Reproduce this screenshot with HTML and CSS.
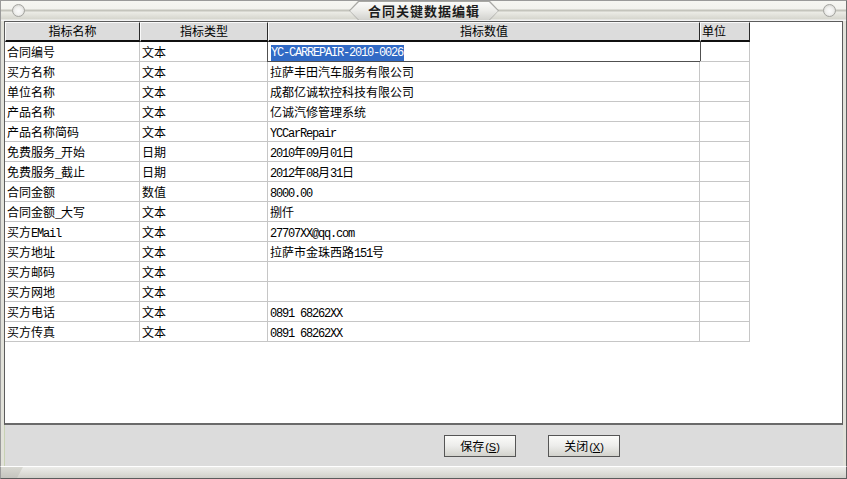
FILE: index.html
```html
<!DOCTYPE html>
<html>
<head>
<meta charset="utf-8">
<title>合同关键数据编辑</title>
<link rel="stylesheet" href="styles.css">
</head>
<body>
<div class="window">
  <div class="titlebar">
    <span class="knob"></span>
    <div class="tab"><div class="tab-in">合同关键数据编辑</div></div>
    <span class="knob"></span>
  </div>
  <div class="middle">
    <div class="grid">
      <div class="row head">
        <div class="c">指标名称</div>
        <div class="c">指标类型</div>
        <div class="c">指标数值</div>
        <div class="c left">单位</div>
      </div>
      <div class="row">
        <div class="c">合同编号</div>
        <div class="c">文本</div>
        <div class="c edit"><span class="sel m">YC-CARREPAIR-2010-0026</span></div>
        <div class="c"></div>
      </div>
      <div class="row">
        <div class="c">买方名称</div>
        <div class="c">文本</div>
        <div class="c">拉萨丰田汽车服务有限公司</div>
        <div class="c"></div>
      </div>
      <div class="row">
        <div class="c">单位名称</div>
        <div class="c">文本</div>
        <div class="c">成都亿诚软控科技有限公司</div>
        <div class="c"></div>
      </div>
      <div class="row">
        <div class="c">产品名称</div>
        <div class="c">文本</div>
        <div class="c">亿诚汽修管理系统</div>
        <div class="c"></div>
      </div>
      <div class="row">
        <div class="c">产品名称简码</div>
        <div class="c">文本</div>
        <div class="c"><span class="m">YCCarRepair</span></div>
        <div class="c"></div>
      </div>
      <div class="row">
        <div class="c">免费服务<span class="m">_</span>开始</div>
        <div class="c">日期</div>
        <div class="c"><span class="m">2010</span>年<span class="m">09</span>月<span class="m">01</span>日</div>
        <div class="c"></div>
      </div>
      <div class="row">
        <div class="c">免费服务<span class="m">_</span>截止</div>
        <div class="c">日期</div>
        <div class="c"><span class="m">2012</span>年<span class="m">08</span>月<span class="m">31</span>日</div>
        <div class="c"></div>
      </div>
      <div class="row">
        <div class="c">合同金额</div>
        <div class="c">数值</div>
        <div class="c"><span class="m">8000.00</span></div>
        <div class="c"></div>
      </div>
      <div class="row">
        <div class="c">合同金额<span class="m">_</span>大写</div>
        <div class="c">文本</div>
        <div class="c">捌仟</div>
        <div class="c"></div>
      </div>
      <div class="row">
        <div class="c">买方<span class="m">EMail</span></div>
        <div class="c">文本</div>
        <div class="c"><span class="m">27707XX@qq.com</span></div>
        <div class="c"></div>
      </div>
      <div class="row">
        <div class="c">买方地址</div>
        <div class="c">文本</div>
        <div class="c">拉萨市金珠西路<span class="m">151</span>号</div>
        <div class="c"></div>
      </div>
      <div class="row">
        <div class="c">买方邮码</div>
        <div class="c">文本</div>
        <div class="c"></div>
        <div class="c"></div>
      </div>
      <div class="row">
        <div class="c">买方网地</div>
        <div class="c">文本</div>
        <div class="c"></div>
        <div class="c"></div>
      </div>
      <div class="row">
        <div class="c">买方电话</div>
        <div class="c">文本</div>
        <div class="c"><span class="m">0891 68262XX</span></div>
        <div class="c"></div>
      </div>
      <div class="row">
        <div class="c">买方传真</div>
        <div class="c">文本</div>
        <div class="c"><span class="m">0891 68262XX</span></div>
        <div class="c"></div>
      </div>
    </div>
    <div class="actions">
      <button class="btn">保存<span class="k">(<u>S</u>)</span></button>
      <button class="btn">关闭<span class="k">(<u>X</u>)</span></button>
    </div>
  </div>
  <div class="bottom"><span class="grip"></span></div>
</div>
</body>
</html>
```

FILE: styles.css
```css
html, body {
  margin: 0;
  padding: 0;
  background: #dcdcdc;
}

.window {
  width: 847px;
  height: 479px;
  display: flex;
  flex-direction: column;
  font: 12px "Noto Sans CJK SC", "Liberation Sans", sans-serif;
  color: #000;
  background: #dcdcdc;
  overflow: hidden;
}

/* ---------- title bar ---------- */
.titlebar {
  flex: none;
  height: 21px;
  box-sizing: border-box;
  border-top: 1px solid #9a9a9a;
  border-left: 1px solid #9a9a9a;
  border-right: 1px solid #707070;
  display: flex;
  justify-content: space-between;
  align-items: flex-start;
  padding: 0 10px 0 11px;
  background: linear-gradient(#f6f6f2 0, #f2f2ee 8px, #c4c4bc 9px, #c4c4bc 10px, #ecece6 11px, #d6d6ce 18px, #f4f4f4 19px, #f4f4f4 20px);
}

.knob {
  width: 13px;
  height: 13px;
  box-sizing: border-box;
  margin-top: 3px;
  border-radius: 50%;
  border: 1px solid #a4a4a0;
  background: radial-gradient(circle at 50% 55%, #fbfbfb 0, #f0f0ee 45%, #c8c8c4 100%);
}

.tab {
  width: 150px;
  height: 19px;
  background: #a8a8a4;
  clip-path: polygon(9px 0, calc(100% - 9px) 0, 100% 50%, calc(100% - 9px) 100%, 9px 100%, 0 50%);
  padding: 1px 1px 0 1px;
  box-sizing: border-box;
}

.tab-in {
  height: 18px;
  clip-path: polygon(9px 0, calc(100% - 9px) 0, 100% 50%, calc(100% - 9px) 100%, 9px 100%, 0 50%);
  background: linear-gradient(#fbfbfa 0, #ededea 45%, #d2d2ce 100%);
  text-align: center;
  font-weight: bold;
  font-size: 13px;
  line-height: 18px;
  letter-spacing: 1px;
  color: #1c1c1c;
}

/* ---------- middle ---------- */
.middle {
  flex: 1;
  display: flex;
  flex-direction: column;
  border-left: 1px solid #9a9a9a;
  border-right: 1px solid #606060;
  padding: 0 3px 0 3px;
  background: #e2e2da;
}

.grid {
  flex: none;
  height: 404px;
  box-sizing: border-box;
  border: 1px solid #5c5c5c;
  border-bottom: 2px solid #6a6a6a;
  background: #fff;
}

.row {
  display: grid;
  grid-template-columns: 135px 128px 432px 50px;
  height: 20px;
}

.c {
  box-sizing: border-box;
  height: 20px;
  border-right: 1px solid #c6c6c6;
  border-bottom: 1px solid #c6c6c6;
  padding-left: 2px;
  line-height: 19px;
  white-space: nowrap;
  overflow: hidden;
}

.head .c {
  background: #dcdcdc;
  border-top: 1px solid #fafafa;
  border-left: 1px solid #fafafa;
  border-right: 1px solid #2a2a2a;
  border-bottom: 2px solid #101010;
  padding-left: 0;
  text-align: center;
  line-height: 16px;
}

.head .c.left {
  text-align: left;
  padding-left: 1px;
}

.c.edit {
  margin-left: -1px;
  margin-right: -1px;
  border: 1px solid #505050;
  border-top: none;
  padding-left: 3px;
  line-height: 18px;
}

.m {
  font-family: "Liberation Mono", monospace;
  font-size: 12px;
  letter-spacing: -1.2px;
}

.sel {
  background: #316ac5;
  color: #fff;
  padding: 1px 1px 2px 0;
}

/* ---------- actions ---------- */
.actions {
  flex: 1;
  display: flex;
  align-items: flex-start;
  gap: 32px;
  padding: 10px 0 0 439px;
  background: #dcdcdc;
  border-left: 1px solid #c8d2b4;
}

.btn {
  width: 72px;
  height: 22px;
  box-sizing: border-box;
  border: 1px solid #555;
  background: linear-gradient(#fbfbf9 0, #ececea 50%, #d2d2cc 100%);
  font: 12px "Noto Sans CJK SC", sans-serif;
  color: #000;
  padding: 0;
  line-height: 19px;
}

.k {
  font-family: "Liberation Sans", sans-serif;
  font-size: 11px;
  margin-left: 1px;
}

/* ---------- bottom frame ---------- */
.bottom {
  flex: none;
  height: 13px;
  box-sizing: border-box;
  border-top: 1px solid #fff;
  border-left: 1px solid #9a9a9a;
  border-right: 1px solid #606060;
  border-bottom: 1px solid #5c5c5c;
  background: linear-gradient(#ececea 0, #dcdcd6 60%, #cfcfc9 100%);
  display: flex;
}

.grip {
  width: 22px;
  height: 100%;
  background: linear-gradient(#d8d8d2, #c4c4be);
  clip-path: polygon(0 0, 100% 0, calc(100% - 6px) 100%, 0 100%);
}
```
